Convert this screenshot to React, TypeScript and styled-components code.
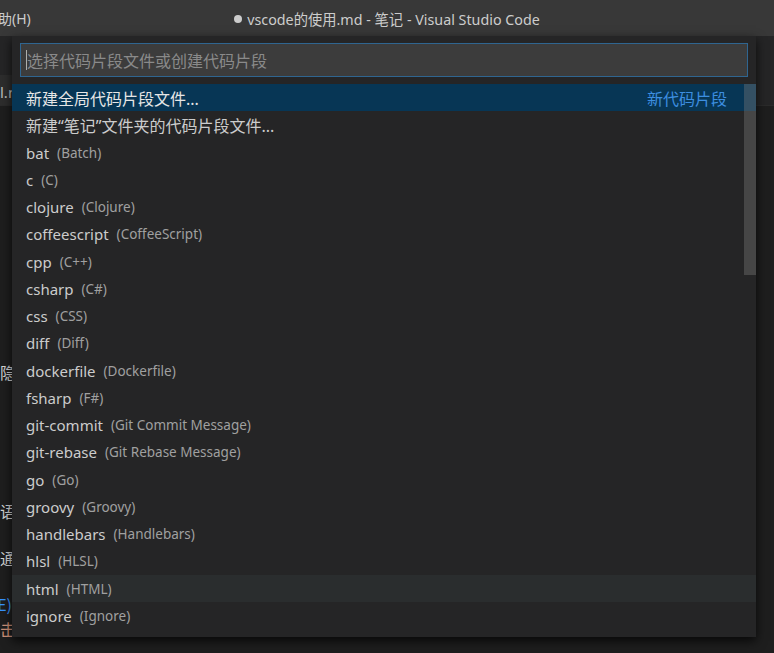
import React from "react";
import styled, { createGlobalStyle } from "styled-components";

const Global = createGlobalStyle`
  html, body { margin: 0; padding: 0; background: #1e1e1e; }
  body { width: 774px; height: 653px; overflow: hidden; font-family: "Noto Sans", "Noto Sans CJK SC", sans-serif; }
  #root { width: 774px; height: 653px; }
`;

const Window = styled.div`
  position: relative;
  width: 774px;
  height: 653px;
  display: flex;
  flex-direction: column;
  background: #1e1e1e;
  overflow: hidden;
`;

const TitleBar = styled.div`
  height: 36px;
  flex: none;
  background: #383838;
  display: grid;
  grid-template-columns: 1fr auto 1fr;
  align-items: center;
  color: #cccccc;
  font-size: 14px;
  font-family: "Noto Sans", "Noto Sans CJK SC", sans-serif;
`;

const Menu = styled.div`
  margin-left: -16px;
  white-space: nowrap;
`;

const Title = styled.div`
  white-space: nowrap;
  display: flex;
  align-items: center;
  gap: 5px;
  font-size: 14.3px;
`;

const Dot = styled.span`
  width: 8px;
  height: 8px;
  border-radius: 50%;
  background: #cccccc;
  flex: none;
  margin-top: 1px;
`;

const TabBar = styled.div`
  height: 69px;
  flex: none;
  background: #252526;
  display: flex;
  flex-direction: column;
  justify-content: flex-end;
  border-bottom: 1px solid #2b2b2b;
`;

const Tab = styled.div`
  height: 30px;
  width: 60px;
  display: flex;
  align-items: center;
  padding-top: 4px;
  box-sizing: border-box;
  background: #2d2d2d;
  color: #bdbdbd;
  font-size: 15px;
  white-space: nowrap;
`;

const Editor = styled.div`
  flex: 1;
  display: flex;
  flex-direction: column;
  width: 12px;
  overflow: hidden;
`;

const Line = styled.div<{ $mt: number; $color?: string; $end?: boolean }>`
  margin-top: ${(p) => p.$mt}px;
  height: 24px;
  display: flex;
  justify-content: ${(p) => (p.$end ? "flex-end" : "flex-start")};
  align-items: center;
  font-size: 16px;
  color: ${(p) => p.$color || "#d4d4d4"};
  font-family: "Noto Sans CJK SC", sans-serif;
  white-space: nowrap;
`;

const Picker = styled.div`
  position: absolute;
  left: 12px;
  top: 36px;
  width: 744px;
  background: #252526;
  box-shadow: 0 4px 10px rgba(0, 0, 0, 0.75);
  display: flex;
  flex-direction: column;
  padding-top: 7px;
  padding-bottom: 8px;
`;

const InputBox = styled.div`
  margin: 0 8px;
  height: 32px;
  background: #3c3c3c;
  border: 1px solid #2f6590;
  display: flex;
  align-items: center;
  padding-left: 5px;
`;

const Caret = styled.span`
  width: 1px;
  height: 20px;
  background: #aeafad;
  flex: none;
`;

const Placeholder = styled.span`
  color: #8a8a8a;
  font-size: 16px;
  font-family: "Noto Sans CJK SC", sans-serif;
  white-space: nowrap;
`;

const List = styled.div`
  position: relative;
  margin-top: 7px;
  display: flex;
  flex-direction: column;
`;

const Row = styled.div<{ $state?: "selected" | "hover" }>`
  height: 27.25px;
  box-sizing: border-box;
  padding: 1px 29px 0 14px;
  display: flex;
  align-items: center;
  background: ${(p) =>
    p.$state === "selected" ? "#073655" : p.$state === "hover" ? "#2a2d2e" : "transparent"};
  white-space: nowrap;
`;

const Label = styled.span<{ $selected?: boolean; $cjk?: boolean }>`
  color: ${(p) => (p.$selected ? "#e6e6e6" : "#cccccc")};
  font-size: ${(p) => (p.$cjk ? 16 : 15)}px;
  font-family: "Noto Sans", "Noto Sans CJK SC", sans-serif;
`;

const Desc = styled.span`
  margin-left: 8px;
  color: #a0a0a0;
  font-size: 13.5px;
  font-family: "Noto Sans", "Noto Sans CJK SC", sans-serif;
`;

const Hint = styled.span`
  margin-left: auto;
  color: #3d8ee0;
  font-size: 16px;
  font-family: "Noto Sans CJK SC", sans-serif;
`;

const ScrollThumb = styled.div`
  position: absolute;
  right: 0;
  top: 0;
  width: 12px;
  height: 191px;
  background: rgba(121, 121, 121, 0.4);
`;

const languages: [string, string][] = [
  ["bat", "Batch"],
  ["c", "C"],
  ["clojure", "Clojure"],
  ["coffeescript", "CoffeeScript"],
  ["cpp", "C++"],
  ["csharp", "C#"],
  ["css", "CSS"],
  ["diff", "Diff"],
  ["dockerfile", "Dockerfile"],
  ["fsharp", "F#"],
  ["git-commit", "Git Commit Message"],
  ["git-rebase", "Git Rebase Message"],
  ["go", "Go"],
  ["groovy", "Groovy"],
  ["handlebars", "Handlebars"],
  ["hlsl", "HLSL"],
  ["html", "HTML"],
  ["ignore", "Ignore"],
];

export default function App() {
  return (
    <Window>
      <Global />
      <TitleBar>
        <Menu>帮助(H)</Menu>
        <Title>
          <Dot />
          <span>vscode的使用.md - 笔记 - Visual Studio Code</span>
        </Title>
        <div />
      </TitleBar>
      <TabBar>
        <Tab>l.md</Tab>
      </TabBar>
      <Editor>
        <Line $mt={254}>隐</Line>
        <Line $mt={115}>语过</Line>
        <Line $mt={23}>通</Line>
        <Line $mt={22} $color="#3794ff" $end>(E)</Line>
        <Line $mt={1} $color="#ce9178">击</Line>
      </Editor>
      <Picker>
        <InputBox>
          <Caret />
          <Placeholder>选择代码片段文件或创建代码片段</Placeholder>
        </InputBox>
        <List>
          <Row $state="selected">
            <Label $selected $cjk>新建全局代码片段文件...</Label>
            <Hint>新代码片段</Hint>
          </Row>
          <Row>
            <Label $cjk>新建“笔记”文件夹的代码片段文件...</Label>
          </Row>
          {languages.map(([id, name]) => (
            <Row key={id} $state={id === "html" ? "hover" : undefined}>
              <Label>{id}</Label>
              <Desc>({name})</Desc>
            </Row>
          ))}
          <ScrollThumb />
        </List>
      </Picker>
    </Window>
  );
}
